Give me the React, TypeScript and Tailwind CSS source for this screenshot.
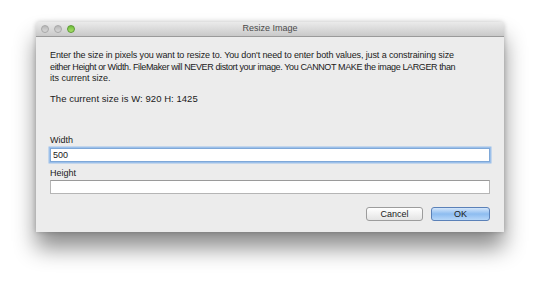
export default function App() {
  return (
    <div
      className="w-[540px] h-[284px] bg-white pl-[36px] pt-[22px]"
      style={{ fontFamily: '"Liberation Sans", Arial, sans-serif' }}
    >
      <div className="w-[468px] h-[210px] bg-[#ececec] rounded-t-[4px] flex flex-col shadow-[0_16px_22px_rgba(0,0,0,0.45),0_0_5px_rgba(0,0,0,0.22)]">
        {/* title bar */}
        <div className="relative h-[15px] shrink-0 rounded-t-[4px] bg-gradient-to-b from-[#ebebeb] to-[#c9c9c9] border-b border-[#9a9a9a] flex items-center">
          <div className="flex gap-[5px] pl-[5px]">
            <span className="w-[8px] h-[8px] rounded-full bg-gradient-to-b from-[#b8b8b8] to-[#d8d8d8] border border-[#a8a8a8]" />
            <span className="w-[8px] h-[8px] rounded-full bg-gradient-to-b from-[#b8b8b8] to-[#d8d8d8] border border-[#a8a8a8]" />
            <span className="w-[8px] h-[8px] rounded-full bg-gradient-to-b from-[#6fbf3a] to-[#a9e06a] border border-[#5c9a34]" />
          </div>
          <div className="absolute inset-0 flex items-center justify-center text-[9px] text-[#4a4a4a]">
            Resize Image
          </div>
        </div>

        {/* body */}
        <div className="flex-1 px-[14px] pt-[13px] text-[9px] leading-[11.5px] text-[#1a1a1a] whitespace-nowrap">
          <p>
            <span className="block tracking-[-0.12px]">
              Enter the size in pixels you want to resize to. You don't need to enter both values, just a constraining size
            </span>
            <span className="block tracking-[-0.38px]">
              either Height or Width. FileMaker will NEVER distort your image. You CANNOT MAKE the image LARGER than
            </span>
            <span className="block">its current size.</span>
          </p>
          <p className="mt-[8px] text-[9.5px] tracking-[0.05px]">The current size is W: 920 H: 1425</p>

          <div className="mt-[30px] leading-[12px]">Width</div>
          <input
            defaultValue="500"
            className="mt-[2px] block w-[440px] h-[14px] bg-white border border-[#7fa8d8] outline-none px-[2px] text-[9px] leading-[12px] shadow-[0_0_0_1.5px_#9cc0ea]"
          />

          <div className="mt-[5px] leading-[12px]">Height</div>
          <div className="mt-[1px] w-[440px] h-[14px] bg-white border border-[#b5b5b5] border-t-[#9a9a9a]" />

          <div className="flex justify-end gap-[8px] mt-[13px]">
            <button className="w-[57px] h-[14px] rounded-[3px] bg-gradient-to-b from-white to-[#e4e4e4] border border-[#9c9c9c] text-[9px] leading-[12px] text-[#1a1a1a]">
              Cancel
            </button>
            <button className="w-[59px] h-[14px] rounded-[3px] bg-gradient-to-b from-[#d4e6fa] via-[#8dbcf0] to-[#b6d6f8] border border-[#5b81b8] text-[9px] leading-[12px] text-[#1a1a1a]">
              OK
            </button>
          </div>
        </div>
      </div>
    </div>
  );
}
